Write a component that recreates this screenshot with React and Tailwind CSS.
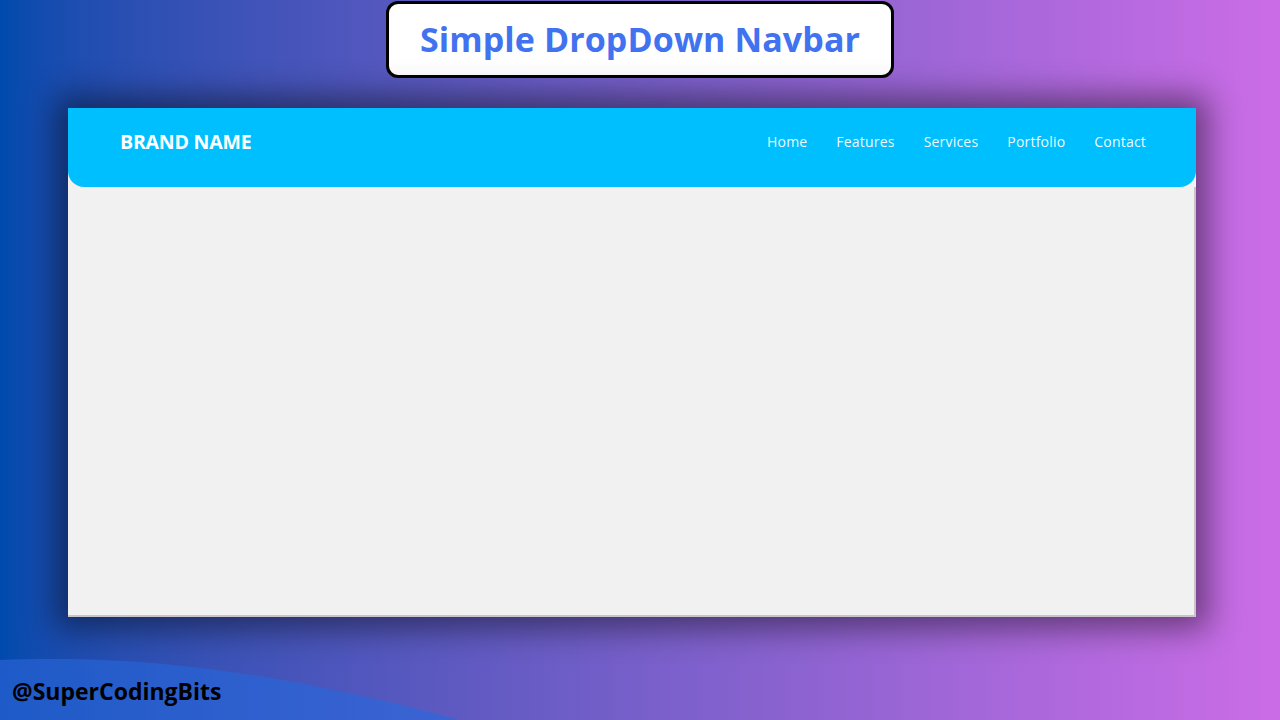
import React from 'react';

const links = ['Home', 'Features', 'Services', 'Portfolio', 'Contact'];

const App = () => {
  return (
    <div className="w-[1280px] h-[720px] overflow-hidden flex flex-col items-center bg-gradient-to-r from-[#004aad] to-[#cb6ce6] font-['Open_Sans',sans-serif]">
      {/* Title badge */}
      <div className="mt-px w-[508px] h-[77px] shrink-0 bg-white border-[3px] border-black rounded-[12px] flex items-center justify-center">
        <h1 className="text-[34px] font-bold text-[#4172ef] tracking-[0.1px] leading-none pb-[2px]">
          Simple DropDown Navbar
        </h1>
      </div>

      {/* Demo window */}
      <div className="mt-[30px] self-start ml-[68px] w-[1128px] h-[509px] shrink-0 flex flex-col bg-[#f1f1f1] shadow-[0_0_30px_12px_rgba(0,0,0,0.45)]">
        <nav className="h-[79px] shrink-0 bg-[#00bfff] rounded-b-[16px] flex items-center justify-between pl-[52px] pr-[50px] pb-[12px]">
          <span className="text-[19.5px] font-bold text-white tracking-[-0.2px]">
            BRAND NAME
          </span>
          <ul className="flex items-center gap-[29px]">
            {links.map((l) => (
              <li key={l} className="text-[14px] tracking-[0.2px] text-white/95">
                {l}
              </li>
            ))}
          </ul>
        </nav>
        <main className="flex-1 border-r-2 border-b-2 border-[#c9c3cc]" />
      </div>

      {/* Footer with wave */}
      <div className="relative flex-1 self-stretch">
        <svg className="absolute left-0 bottom-0" width="480" height="62" viewBox="0 0 480 62">
          <defs>
            <linearGradient id="wv" x1="0" y1="0" x2="1" y2="0">
              <stop offset="0" stopColor="#1e5bc8" />
              <stop offset="1" stopColor="#3d63d3" />
            </linearGradient>
          </defs>
          <path d="M0 2 C 120 -3, 260 8, 460 62 L 0 62 Z" fill="url(#wv)" />
        </svg>
        <div className="absolute left-[12px] bottom-[17px] text-[23px] font-bold text-black leading-none">
          @SuperCodingBits
        </div>
      </div>
    </div>
  );
};

export default App;
